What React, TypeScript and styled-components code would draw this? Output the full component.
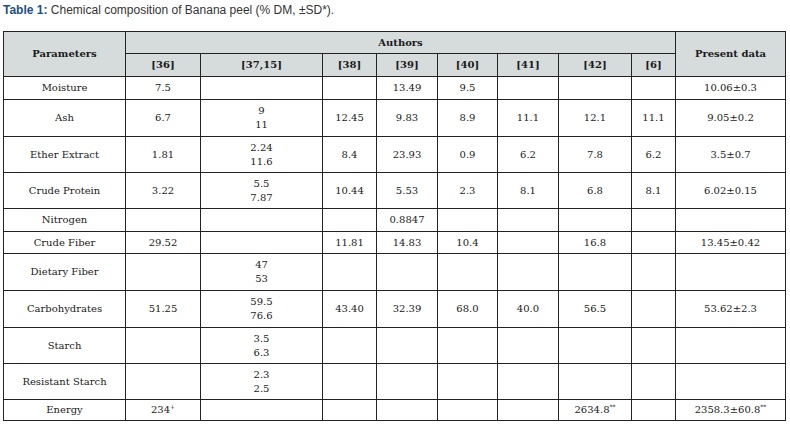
import React from "react";
import styled, { createGlobalStyle } from "styled-components";

const GlobalStyle = createGlobalStyle`
  html, body {
    margin: 0;
    padding: 0;
    background: #ffffff;
  }
`;

const Page = styled.div`
  padding: 2px 5px 0 3px;
`;

const Caption = styled.div`
  font-family: "Liberation Sans", Arial, sans-serif;
  font-size: 12px;
  line-height: 16px;
  color: #333333;
  margin-bottom: 13px;
  strong {
    color: #1c4f86;
    font-weight: bold;
  }
`;

const Table = styled.table`
  width: 782px;
  border-collapse: collapse;
  table-layout: fixed;
  font-family: "DejaVu Serif", "Liberation Serif", serif;
  font-size: 10px;
  line-height: 14px;
  color: #1a1a1a;
`;

const Row = styled.tr<{ $h: number }>`
  height: ${(p) => p.$h}px;
`;

const Head = styled.th`
  background: #d6dcdc;
  border: 1px solid #222222;
  font-weight: bold;
  text-align: center;
  padding: 0 3px;
`;

const Cell = styled.td`
  border: 1px solid #222222;
  text-align: center;
  vertical-align: middle;
  padding: 0 3px;
  white-space: nowrap;
`;

const Sup = styled.sup`
  font-size: 6px;
  line-height: 0;
  vertical-align: 4px;
`;

const widths = [122, 75, 122, 54, 61, 60, 61, 73, 44, 110];
const authors = ["[36]", "[37,15]", "[38]", "[39]", "[40]", "[41]", "[42]", "[6]"];

type Value = string | string[] | { v: string; sup: string };

const rows: { name: string; h: number; values: Value[] }[] = [
  { name: "Moisture", h: 23, values: ["7.5", "", "", "13.49", "9.5", "", "", "", "10.06±0.3"] },
  { name: "Ash", h: 37, values: ["6.7", ["9", "11"], "12.45", "9.83", "8.9", "11.1", "12.1", "11.1", "9.05±0.2"] },
  { name: "Ether Extract", h: 36, values: ["1.81", ["2.24", "11.6"], "8.4", "23.93", "0.9", "6.2", "7.8", "6.2", "3.5±0.7"] },
  { name: "Crude Protein", h: 36, values: ["3.22", ["5.5", "7.87"], "10.44", "5.53", "2.3", "8.1", "6.8", "8.1", "6.02±0.15"] },
  { name: "Nitrogen", h: 23, values: ["", "", "", "0.8847", "", "", "", "", ""] },
  { name: "Crude Fiber", h: 22, values: ["29.52", "", "11.81", "14.83", "10.4", "", "16.8", "", "13.45±0.42"] },
  { name: "Dietary Fiber", h: 37, values: ["", ["47", "53"], "", "", "", "", "", "", ""] },
  { name: "Carbohydrates", h: 37, values: ["51.25", ["59.5", "76.6"], "43.40", "32.39", "68.0", "40.0", "56.5", "", "53.62±2.3"] },
  { name: "Starch", h: 36, values: ["", ["3.5", "6.3"], "", "", "", "", "", "", ""] },
  { name: "Resistant Starch", h: 36, values: ["", ["2.3", "2.5"], "", "", "", "", "", "", ""] },
  {
    name: "Energy",
    h: 21,
    values: [
      { v: "234", sup: "+" },
      "",
      "",
      "",
      "",
      "",
      { v: "2634.8", sup: "**" },
      "",
      { v: "2358.3±60.8", sup: "**" },
    ],
  },
];

function renderValue(value: Value) {
  if (Array.isArray(value)) {
    return value.map((line, i) => (
      <React.Fragment key={i}>
        {i > 0 && <br />}
        {line}
      </React.Fragment>
    ));
  }
  if (typeof value === "object") {
    return (
      <>
        {value.v}
        <Sup>{value.sup}</Sup>
      </>
    );
  }
  return value;
}

export default function App() {
  return (
    <Page>
      <GlobalStyle />
      <Caption>
        <strong>Table 1:</strong> Chemical composition of Banana peel (% DM, ±SD*).
      </Caption>
      <Table>
        <colgroup>
          {widths.map((w, i) => (
            <col key={i} style={{ width: w }} />
          ))}
        </colgroup>
        <thead>
          <Row $h={22}>
            <Head rowSpan={2}>Parameters</Head>
            <Head colSpan={8}>Authors</Head>
            <Head rowSpan={2}>Present data</Head>
          </Row>
          <Row $h={23}>
            {authors.map((a) => (
              <Head key={a}>{a}</Head>
            ))}
          </Row>
        </thead>
        <tbody>
          {rows.map((row) => (
            <Row key={row.name} $h={row.h}>
              <Cell>{row.name}</Cell>
              {row.values.map((v, i) => (
                <Cell key={i}>{renderValue(v)}</Cell>
              ))}
            </Row>
          ))}
        </tbody>
      </Table>
    </Page>
  );
}
